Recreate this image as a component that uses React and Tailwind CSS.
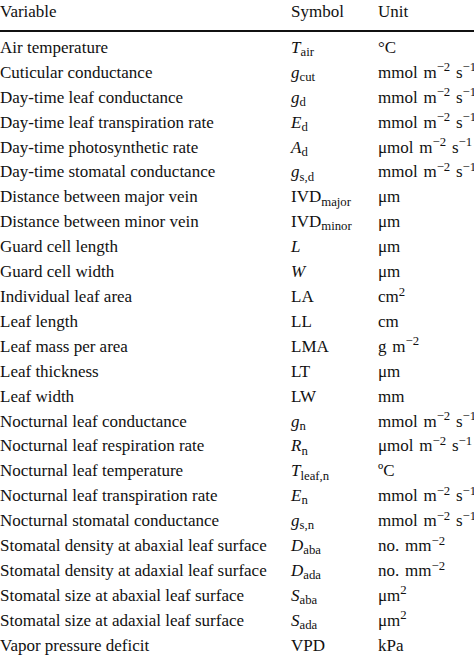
import React from "react";

const I = ({ children }) => <i>{children}</i>;

const mmol = (
  <>
    mmol m<sup>−2</sup> s<sup>−1</sup>
  </>
);
const umol = (
  <>
    μmol m<sup>−2</sup> s<sup>−1</sup>
  </>
);

const rows = [
  ["Air temperature", <><I>T</I><sub>air</sub></>, "°C"],
  ["Cuticular conductance", <><I>g</I><sub>cut</sub></>, mmol],
  ["Day-time leaf conductance", <><I>g</I><sub>d</sub></>, mmol],
  ["Day-time leaf transpiration rate", <><I>E</I><sub>d</sub></>, mmol],
  ["Day-time photosynthetic rate", <><I>A</I><sub>d</sub></>, umol],
  ["Day-time stomatal conductance", <><I>g</I><sub>s,d</sub></>, mmol],
  ["Distance between major vein", <>IVD<sub>major</sub></>, "μm"],
  ["Distance between minor vein", <>IVD<sub>minor</sub></>, "μm"],
  ["Guard cell length", <I>L</I>, "μm"],
  ["Guard cell width", <I>W</I>, "μm"],
  ["Individual leaf area", "LA", <>cm<sup>2</sup></>],
  ["Leaf length", "LL", "cm"],
  ["Leaf mass per area", "LMA", <>g m<sup>−2</sup></>],
  ["Leaf thickness", "LT", "μm"],
  ["Leaf width", "LW", "mm"],
  ["Nocturnal leaf conductance", <><I>g</I><sub>n</sub></>, mmol],
  ["Nocturnal leaf respiration rate", <><I>R</I><sub>n</sub></>, umol],
  ["Nocturnal leaf temperature", <><I>T</I><sub>leaf,n</sub></>, "ºC"],
  ["Nocturnal leaf transpiration rate", <><I>E</I><sub>n</sub></>, mmol],
  ["Nocturnal stomatal conductance", <><I>g</I><sub>s,n</sub></>, mmol],
  ["Stomatal density at abaxial leaf surface", <><I>D</I><sub>aba</sub></>, <>no. mm<sup>−2</sup></>],
  ["Stomatal density at adaxial leaf surface", <><I>D</I><sub>ada</sub></>, <>no. mm<sup>−2</sup></>],
  ["Stomatal size at abaxial leaf surface", <><I>S</I><sub>aba</sub></>, <>μm<sup>2</sup></>],
  ["Stomatal size at adaxial leaf surface", <><I>S</I><sub>ada</sub></>, <>μm<sup>2</sup></>],
  ["Vapor pressure deficit", "VPD", "kPa"],
];

export default function App() {
  return (
    <div className="w-[474px] h-[660px] overflow-hidden bg-white text-[#111] font-['Liberation_Serif',serif] text-[17px] leading-[24.9px] whitespace-nowrap">
      <div className="grid grid-cols-[291px_87px_1fr] pb-[5px] border-b-2 border-[#111]">
        <div>Variable</div>
        <div>Symbol</div>
        <div>Unit</div>
      </div>
      <div className="pt-[4px]">
        {rows.map(([name, symbol, unit]) => (
          <div key={name} className="grid grid-cols-[291px_87px_1fr]">
            <div>{name}</div>
            <div>{symbol}</div>
            <div className="[word-spacing:1.5px]">{unit}</div>
          </div>
        ))}
      </div>
    </div>
  );
}
